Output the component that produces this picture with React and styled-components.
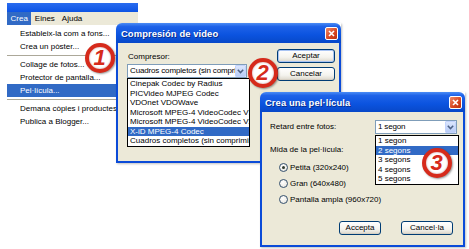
import React from 'react';
import styled, { createGlobalStyle } from 'styled-components';

const GlobalStyle = createGlobalStyle`
  html, body { margin: 0; padding: 0; background: #fff; }
  body { font-family: "Liberation Sans", Arial, sans-serif; font-size: 8px; color: #000; }
`;

const Desktop = styled.div`
  position: relative;
  width: 469px;
  height: 249px;
  overflow: hidden;
  background: #fff;
`;

/* ---------- app window with menu ---------- */
const AppWindow = styled.div`
  position: absolute;
  left: 7px;
  top: 3px;
  width: 131px;
  display: flex;
  flex-direction: column;
  z-index: 1;
`;
const AppTitle = styled.div`
  height: 9px;
  background: linear-gradient(#2a6cef, #0d54e4);
`;
const MenuBar = styled.div`
  height: 13px;
  background: #ece9d8;
  display: flex;
  align-items: stretch;
`;
const MenuBarItem = styled.div`
  padding: 0 3.5px;
  line-height: 13px;
  font-size: 8px;
  background: ${p => (p.$active ? '#316ac5' : 'transparent')};
  color: ${p => (p.$active ? '#fff' : '#000')};
`;
const Dropdown = styled.div`
  position: absolute;
  left: 7px;
  top: 25px;
  width: 112px;
  padding-top: 2px;
  background: #fff;
  display: flex;
  flex-direction: column;
  z-index: 1;
`;
const DropItem = styled.div`
  height: 13px;
  line-height: 13px;
  padding-left: 13px;
  white-space: nowrap;
  background: ${p => (p.$active ? '#316ac5' : 'transparent')};
  color: ${p => (p.$active ? '#fff' : '#000')};
`;
const DropSep = styled.div`
  height: 1px;
  margin: 2px 0;
  background: #aca899;
`;

/* ---------- dialogs ---------- */
const Win = styled.div`
  position: absolute;
  left: ${p => p.$x}px;
  top: ${p => p.$y}px;
  width: ${p => p.$w}px;
  height: ${p => p.$h}px;
  z-index: ${p => p.$z};
  display: flex;
  flex-direction: column;
  box-shadow: 1px 1px 2px rgba(0, 0, 0, 0.25);
`;
const TitleBar = styled.div`
  height: 20px;
  flex: none;
  box-sizing: border-box;
  display: flex;
  align-items: center;
  padding: 0 3px 0 5px;
  border-radius: 6px 6px 0 0;
  background: linear-gradient(#4b8cf5 0%, #1e62e8 18%, #0b53df 60%, #0848c8 100%);
  color: #fff;
  font-weight: bold;
  font-size: 9.4px;
  letter-spacing: 0.1px;
  text-shadow: 1px 1px 0 #0b2d8c;
`;
const TitleText = styled.span`
  flex: 1;
  white-space: nowrap;
`;
const CloseBtn = styled.div`
  width: 13px;
  height: 13px;
  box-sizing: border-box;
  border: 1px solid #fff;
  border-radius: 2px;
  background: linear-gradient(135deg, #f08a68, #d6441f 60%, #b8310f);
  display: flex;
  align-items: center;
  justify-content: center;
`;
const Body = styled.div`
  flex: 1;
  box-sizing: border-box;
  background: #ece9d8;
  border: 2px solid #0b4bd8;
  border-top: 0;
`;

/* compression dialog */
const CompBody = styled(Body)`
  display: flex;
  padding: 6px 4px 0 9px;
`;
const LeftCol = styled.div`
  display: flex;
  flex-direction: column;
  width: 123px;
`;
const FieldLabel = styled.div`
  line-height: 10px;
  height: 10px;
  margin-top: ${p => p.$mt || 0}px;
  padding-left: ${p => p.$pl || 0}px;
  margin-bottom: ${p => p.$mb || 0}px;
  white-space: nowrap;
`;
const Select = styled.div`
  width: ${p => p.$w}px;
  height: 14px;
  box-sizing: border-box;
  border: 1px solid #7f9db9;
  background: #fff;
  display: flex;
  align-items: stretch;
`;
const SelectText = styled.div`
  flex: 1;
  line-height: 12px;
  padding-left: 2px;
  letter-spacing: -0.15px;
  white-space: nowrap;
  overflow: hidden;
`;
const ArrowBtn = styled.div`
  width: 11px;
  flex: none;
  box-sizing: border-box;
  border: 1px solid #c3d3fd;
  border-radius: 1px;
  background: linear-gradient(#dbe6fd, #b9cdf7);
  display: flex;
  align-items: center;
  justify-content: center;
`;
const ListBox = styled.div`
  box-sizing: border-box;
  width: ${p => p.$w}px;
  border: 1px solid #000;
  background: #fff;
  display: flex;
  flex-direction: column;
`;
const ListItem = styled.div`
  height: 9.5px;
  line-height: 9.5px;
  padding-left: 2px;
  white-space: nowrap;
  overflow: hidden;
  background: ${p => (p.$sel ? '#316ac5' : 'transparent')};
  color: ${p => (p.$sel ? '#fff' : '#000')};
`;
const RightCol = styled.div`
  margin-left: auto;
  display: flex;
  flex-direction: column;
  gap: 4px;
`;
const Button = styled.div`
  box-sizing: border-box;
  width: ${p => p.$w}px;
  height: 14px;
  border: 1px solid #003c74;
  border-radius: 3px;
  background: linear-gradient(#ffffff, #f4f3ee 60%, #dcd7cb);
  box-shadow: ${p => (p.$def ? 'inset 0 0 0 1px #a9c4f3' : 'inset 0 -1px 0 #d6d0c4')};
  text-align: center;
  line-height: 12px;
  font-size: 8px;
`;

/* movie dialog */
const MovieBody = styled(Body)`
  display: flex;
  flex-direction: column;
  padding: 8px 6px 0 8px;
`;
const Row = styled.div`
  display: flex;
  align-items: center;
  height: 14px;
`;
const SelectWrap = styled.div`
  position: relative;
  margin-left: auto;
`;
const DropList = styled(ListBox)`
  position: absolute;
  left: 0;
  top: 15px;
  z-index: 2;
`;
const RadioList = styled.div`
  display: flex;
  flex-direction: column;
  margin-top: 4px;
  padding-left: 9px;
`;
const RadioRow = styled.div`
  display: flex;
  align-items: center;
  height: 16px;
  gap: 2px;
  white-space: nowrap;
`;
const RadioDot = styled.div`
  width: 9px;
  height: 9px;
  box-sizing: border-box;
  border-radius: 50%;
  border: 1px solid #34506e;
  background: radial-gradient(circle at 40% 35%, #fff, #e4e2da);
  display: flex;
  align-items: center;
  justify-content: center;
  &::after {
    content: '';
    width: 3px;
    height: 3px;
    border-radius: 50%;
    background: ${p => (p.$on ? '#2f3a2f' : 'transparent')};
  }
`;
const ButtonRow = styled.div`
  display: flex;
  justify-content: flex-end;
  gap: 20px;
  margin-top: 14px;
  padding-right: 4px;
`;

/* badges */
const Badge = styled.div`
  position: absolute;
  left: ${p => p.$x - 15}px;
  top: ${p => p.$y - 15}px;
  width: 30px;
  height: 30px;
  box-sizing: border-box;
  border-radius: 50%;
  border: 4px solid #d62a1b;
  background: #fff;
  display: flex;
  align-items: center;
  justify-content: center;
  color: #d62a1b;
  font: italic 900 22px "Liberation Sans", Arial, sans-serif;
  line-height: 1;
  padding-right: 1px;
  box-shadow: 1px 1px 2px rgba(0, 0, 0, 0.4), inset 0 0 2px rgba(120, 0, 0, 0.5);
  z-index: 10;
`;

const Chevron = () => (
  <svg width="7" height="5" viewBox="0 0 7 5">
    <path d="M0.8 0.8 L3.5 3.6 L6.2 0.8" fill="none" stroke="#4d6185" strokeWidth="1.5" />
  </svg>
);

const XIcon = () => (
  <svg width="7" height="7" viewBox="0 0 7 7">
    <path d="M1 1 L6 6 M6 1 L1 6" stroke="#fff" strokeWidth="1.6" />
  </svg>
);

const codecs = [
  'Cinepak Codec by Radius',
  'PICVideo MJPEG Codec',
  'VDOnet VDOWave',
  'Microsoft MPEG-4 VideoCodec V1',
  'Microsoft MPEG-4 VideoCodec V2',
  'X-iD MPEG-4 Codec',
  'Cuadros completos (sin comprimir)',
];
const delays = ['1 segon', '2 segons', '3 segons', '4 segons', '5 segons'];
const sizes = ['Petita (320x240)', 'Gran (640x480)', 'Pantalla ampla (960x720)'];

export default function App() {
  return (
    <Desktop>
      <GlobalStyle />

      <AppWindow>
        <AppTitle />
        <MenuBar>
          <MenuBarItem $active>Crea</MenuBarItem>
          <MenuBarItem>Eines</MenuBarItem>
          <MenuBarItem>Ajuda</MenuBarItem>
        </MenuBar>
      </AppWindow>
      <Dropdown>
        <DropItem>Estableix-la com a fons...</DropItem>
        <DropItem>Crea un pòster...</DropItem>
        <DropSep />
        <DropItem>Collage de fotos...</DropItem>
        <DropItem>Protector de pantalla...</DropItem>
        <DropItem $active>Pel·lícula...</DropItem>
        <DropSep />
        <DropItem>Demana còpies i productes...</DropItem>
        <DropItem>Publica a Blogger...</DropItem>
      </Dropdown>

      <Win $x={116} $y={23} $w={225} $h={140} $z={2}>
        <TitleBar>
          <TitleText>Compresión de video</TitleText>
          <CloseBtn><XIcon /></CloseBtn>
        </TitleBar>
        <CompBody>
          <LeftCol>
            <FieldLabel $mt={3} $pl={1} $mb={2}>Compresor:</FieldLabel>
            <Select $w={120}>
              <SelectText>Cuadros completos (sin comprimir)</SelectText>
              <ArrowBtn><Chevron /></ArrowBtn>
            </Select>
            <ListBox $w={123}>
              {codecs.map((c, i) => (
                <ListItem key={c} $sel={i === 5}>{c}</ListItem>
              ))}
            </ListBox>
          </LeftCol>
          <RightCol>
            <Button $w={58} $def>Aceptar</Button>
            <Button $w={58}>Cancelar</Button>
          </RightCol>
        </CompBody>
      </Win>

      <Win $x={260} $y={92} $w={205} $h={155} $z={3}>
        <TitleBar>
          <TitleText>Crea una pel·lícula</TitleText>
          <CloseBtn><XIcon /></CloseBtn>
        </TitleBar>
        <MovieBody>
          <Row>
            <FieldLabel>Retard entre fotos:</FieldLabel>
            <SelectWrap>
              <Select $w={82}>
                <SelectText>1 segon</SelectText>
                <ArrowBtn><Chevron /></ArrowBtn>
              </Select>
              <DropList $w={84}>
                {delays.map((d, i) => (
                  <ListItem key={d} $sel={i === 1}>{d}</ListItem>
                ))}
              </DropList>
            </SelectWrap>
          </Row>
          <FieldLabel $mt={11}>Mida de la pel·lícula:</FieldLabel>
          <RadioList>
            {sizes.map((s, i) => (
              <RadioRow key={s}>
                <RadioDot $on={i === 0} />
                {s}
              </RadioRow>
            ))}
          </RadioList>
          <ButtonRow>
            <Button $w={42}>Accepta</Button>
            <Button $w={52}>Cancel·la</Button>
          </ButtonRow>
        </MovieBody>
      </Win>

      <Badge $x={100} $y={58}>1</Badge>
      <Badge $x={263} $y={73}>2</Badge>
      <Badge $x={437} $y={163}>3</Badge>
    </Desktop>
  );
}
